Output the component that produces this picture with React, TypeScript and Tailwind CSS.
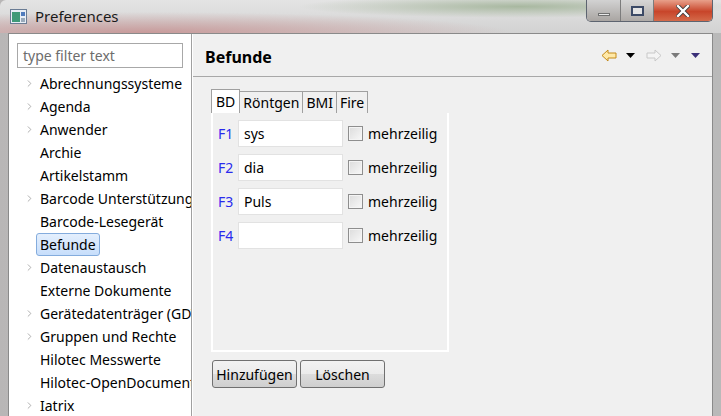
import { ChevronRight } from 'lucide-react';

const treeItems: { label: string; children: boolean; selected?: boolean }[] = [
  { label: 'Abrechnungssysteme', children: true },
  { label: 'Agenda', children: true },
  { label: 'Anwender', children: true },
  { label: 'Archie', children: false },
  { label: 'Artikelstamm', children: false },
  { label: 'Barcode Unterstützung', children: true },
  { label: 'Barcode-Lesegerät', children: false },
  { label: 'Befunde', children: false, selected: true },
  { label: 'Datenaustausch', children: true },
  { label: 'Externe Dokumente', children: false },
  { label: 'Gerätedatenträger (GDT)', children: true },
  { label: 'Gruppen und Rechte', children: true },
  { label: 'Hilotec Messwerte', children: false },
  { label: 'Hilotec-OpenDocument', children: false },
  { label: 'Iatrix', children: true },
];

const fields = [
  { key: 'F1', value: 'sys' },
  { key: 'F2', value: 'dia' },
  { key: 'F3', value: 'Puls' },
  { key: 'F4', value: '' },
];

const tabs = ['BD', 'Röntgen', 'BMI', 'Fire'];

const Triangle = ({ color }: { color: string }) => (
  <svg width="9" height="6" viewBox="0 0 9 6">
    <path d="M0 0h9L4.5 5z" fill={color} />
  </svg>
);

const Arrow = ({ dir, fill, stroke }: { dir: 'left' | 'right'; fill: string; stroke: string }) => (
  <svg width="16" height="13" viewBox="0 0 16 13" style={{ transform: dir === 'right' ? 'scaleX(-1)' : undefined }}>
    <path d="M1 6.5 L7 1 V4 H15 V9 H7 V12 Z" fill={fill} stroke={stroke} strokeWidth="1" strokeLinejoin="round" />
  </svg>
);

export default function App() {
  return (
    <div
      className="w-[721px] h-[416px] overflow-hidden flex flex-col bg-[linear-gradient(90deg,#b8b6b6_0%,#c9c9c9_40%,#bdbdbd_70%,#b9b9b9_100%)]"
      style={{ fontFamily: '"Noto Sans", "Open Sans", sans-serif' }}
    >
      {/* title bar */}
      <div className="h-[33px] flex items-start relative rounded-tl-[6px] bg-[radial-gradient(ellipse_at_20%_100%,#c89a9a_0%,rgba(200,150,150,0)_45%),radial-gradient(ellipse_at_72%_20%,#a8b8a0_0%,rgba(168,184,160,0)_30%),linear-gradient(180deg,#e4e4e4_0%,#d2d2d2_100%)]">
        <div className="flex items-center gap-[8px] pl-[10px] pt-[9px]">
          <svg width="17" height="15" viewBox="0 0 17 15">
            <rect x="0.5" y="0.5" width="16" height="14" fill="#e8eef6" stroke="#6a7c94" />
            <rect x="2" y="3" width="8" height="10" fill="#3f9a78" />
            <rect x="11" y="3" width="4" height="4" fill="#4f7bbd" />
            <rect x="11" y="9" width="4" height="4" fill="#9ab" />
          </svg>
          <span className="text-[15px] text-[#1a1a1a] leading-none">Preferences</span>
        </div>
        <div className="ml-auto mr-[8px] flex h-[22px] rounded-b-[5px] border border-t-0 border-[#5d6470] overflow-hidden">
          <div className="w-[34px] flex items-center justify-center bg-[linear-gradient(180deg,#d2d2d2,#a9a5a2)] border-r border-[#7c7c7c]">
            <div className="w-[12px] h-[3px] mt-[8px] bg-[#e8e8e8] border border-[#707070]" />
          </div>
          <div className="w-[33px] flex items-center justify-center bg-[linear-gradient(180deg,#d6d6d6,#aeaaa7)] border-r border-[#7c7c7c]">
            <div className="w-[13px] h-[10px] border-[2px] border-[#3c4a66] bg-[#e4e4e4]" />
          </div>
          <div className="w-[58px] flex items-center justify-center bg-[linear-gradient(180deg,#e8a08a,#c8452a_55%,#d46a4a)]">
            <svg width="14" height="12" viewBox="0 0 14 12">
              <path d="M2 1 L12 11 M12 1 L2 11" stroke="#3a3a3a" strokeWidth="4" strokeLinecap="square" />
              <path d="M2 1 L12 11 M12 1 L2 11" stroke="#ffffff" strokeWidth="2.4" strokeLinecap="square" />
            </svg>
          </div>
        </div>
      </div>

      {/* body */}
      <div className="flex-1 flex px-[8px] min-h-0">
        <div className="flex-1 flex min-h-0 border-l border-t border-r border-[#8a8a8a] bg-[#f0f0f0]">
          {/* left tree */}
          <div className="w-[182px] bg-white flex flex-col shrink-0 overflow-hidden">
            <div className="pt-[9px] pl-[8px] pr-[8px]">
              <div className="h-[25px] border border-[#a8a8a8] flex items-center pl-[5px] text-[14px] text-[#6d6d6d]">
                type filter text
              </div>
            </div>
            <div className="pt-[4px] flex flex-col">
              {treeItems.map((item) => (
                <div key={item.label} className="h-[23px] flex items-center whitespace-nowrap">
                  <div className="w-[31px] pl-[15px] flex items-center shrink-0">
                    {item.children && <ChevronRight size={11} strokeWidth={1.5} className="text-[#8c8c8c]" />}
                  </div>
                  <span
                    className={
                      item.selected
                        ? 'text-[14px] text-black px-[3px] -ml-[4px] h-[23px] flex items-center rounded-[3px] border border-[#84acdd] bg-[linear-gradient(180deg,#e4effd,#c7defb)]'
                        : 'text-[14px] text-black'
                    }
                  >
                    {item.label}
                  </span>
                </div>
              ))}
            </div>
          </div>
          <div className="w-[2px] bg-[#a0a0a0] shrink-0 border-r border-white" />

          {/* right page */}
          <div className="flex-1 flex flex-col min-w-0">
            <div className="h-[43px] flex items-start pt-[11px] pl-[12px] pr-[10px] border-b border-[#a8a8a8]">
              <span className="text-[16px] font-bold text-black">Befunde</span>
              <div className="ml-auto flex items-center pt-[4px] pr-[2px]">
                <Arrow dir="left" fill="#ffe9a8" stroke="#c48a18" />
                <div className="ml-[9px]"><Triangle color="#000000" /></div>
                <div className="ml-[11px]"><Arrow dir="right" fill="#f4f4f4" stroke="#c8c8c8" /></div>
                <div className="ml-[9px]"><Triangle color="#7a7a7a" /></div>
                <div className="ml-[11px]"><Triangle color="#3a2f78" /></div>
              </div>
            </div>

            <div className="pl-[18px] pt-[12px] flex flex-col items-start">
              <div className="flex items-end h-[24px]">
                {tabs.map((t, i) => (
                  <div
                    key={t}
                    className={
                      i === 0
                        ? 'h-[24px] px-[4px] flex items-center text-[14px] text-black bg-white border border-b-0 border-[#a0a0a0]'
                        : 'h-[22px] px-[3px] flex items-center text-[14px] text-black bg-[#f0f0f0] border-t border-r border-[#a0a0a0]'
                    }
                  >
                    {t}
                  </div>
                ))}
              </div>
              <div className="w-[238px] h-[239px] border-[2px] border-white border-t-0 bg-[#f0f0f0] flex flex-col gap-[7px] pt-[7px] pl-[5px]">
                {fields.map((f) => (
                  <div key={f.key} className="flex items-center h-[27px]">
                    <span className="w-[20px] text-[14px] text-[#2a2aee]">{f.key}</span>
                    <div className="w-[105px] h-[27px] bg-white border border-[#e2e2e2] flex items-center pl-[5px] text-[14px] text-black">
                      {f.value}
                    </div>
                    <div className="ml-[5px] w-[15px] h-[15px] border border-[#8e8e8e] bg-[linear-gradient(135deg,#dcdcdc,#f8f8f8)] shadow-[inset_0_0_0_1px_#f4f4f4]" />
                    <span className="ml-[5px] text-[14px] text-black">mehrzeilig</span>
                  </div>
                ))}
              </div>
              <div className="flex gap-[3px] mt-[8px] -ml-[5px] pl-[6px]">
                <button className="w-[85px] h-[28px] rounded-[3px] border border-[#707070] bg-[linear-gradient(180deg,#f2f2f2_0%,#ebebeb_50%,#dcdcdc_51%,#cfcfcf_100%)] text-[14px] text-black">
                  Hinzufügen
                </button>
                <button className="w-[85px] h-[28px] rounded-[3px] border border-[#707070] bg-[linear-gradient(180deg,#f2f2f2_0%,#ebebeb_50%,#dcdcdc_51%,#cfcfcf_100%)] text-[14px] text-black">
                  Löschen
                </button>
              </div>
            </div>
          </div>
        </div>
      </div>
    </div>
  );
}
